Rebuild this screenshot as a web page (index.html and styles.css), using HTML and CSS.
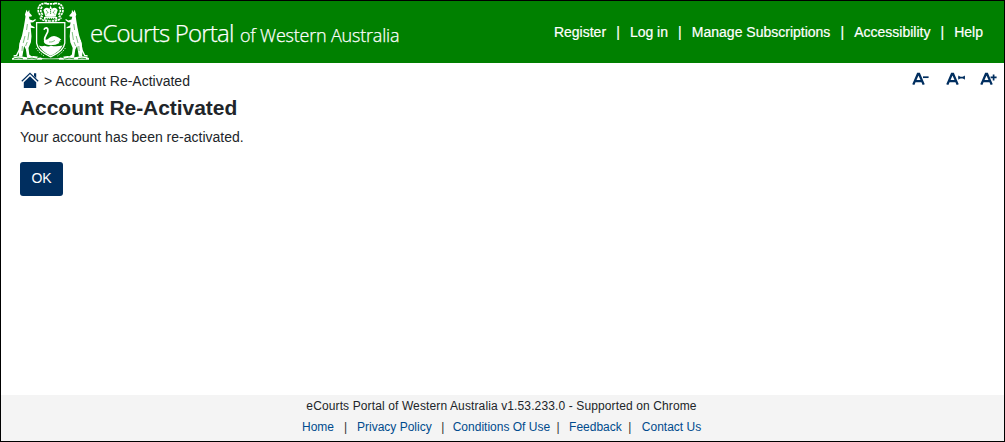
FILE: index.html
```html
<!DOCTYPE html>
<html lang="en">
<head>
<meta charset="utf-8">
<title>Account Re-Activated - eCourts Portal</title>
<link rel="stylesheet" href="styles.css">
</head>
<body>
<div class="page">
  <header class="header">
    <svg class="crest" viewBox="12 1 77 60" fill="#fff" aria-label="Coat of arms">
      <!-- supporter, mirrored for the right side -->
      <g id="kangaroo">
        <path d="M26.6 9.8l1.2 2.4 1.4-2.4.3 3 2.4 2.8-.4 1-2.6.2.8 2.8 3.2.8 2.4-1.4.6 1-2.8 2.2-2.6.3.8 3 3.4 1.8-.2 1-3.8-.6.8 8.6-.6 6-2.4 5.6.8 6.6 2.6 2v1.3h-4.8l-1.2-8.4-1.8-3.4-1.4 8.4-.4 2.4h-3.2l-.4-5 .8-8.6 2.6-8 1.6-7.6 1.2-7 .6-4.2-.6-2z"/>
        <path d="M21 40l-1.8 10-2.6 5.4-3 .6" fill="none" stroke="#fff" stroke-width="1.3"/>
        <path d="M27.4 24l-.8 6M29 32l-1.2 8M25 36l-1.8 7M27.2 42l-1.6 4M22.4 46l-.4 5" fill="none" stroke="#008000" stroke-width=".7" opacity=".7"/>
      </g>
      <use href="#kangaroo" transform="matrix(-1 0 0 1 101.2 0)"/>
      <!-- crown and mantling -->
      <path d="M43.4 10q2.5-4 6-1.2L50.6 5.6l1.3 3.2q3.4-2.8 5.8 1.2l-2 6.4H45.4z"/>
      <path d="M44 17q6.4-1.6 13.2 0v2.8q-6.6-1.4-13.2 0z"/>
      <g fill="none" stroke="#fff" stroke-width="1.7" stroke-dasharray="2.4 .7">
        <path d="M47 3.4q-8.4-.6-8.8 6.4 0 5 5 7.4M42 6.8q-2.8 4.2.8 8M54.2 3.4q8.4-.6 8.8 6.4 0 5-5 7.4M59.2 6.8q2.8 4.2-.8 8M40 17.6q2 3.6 10.6 3.4 8.6.2 10.6-3.4M46.6 3.8h8"/>
      </g>
      <path d="M46.4 10.4l1.5 2-1.5 2M54.8 10.4l-1.5 2 1.5 2M50.6 9v5M45.5 18.4h10" fill="none" stroke="#008000" stroke-width=".9" stroke-dasharray="1.4 .7"/>
      <!-- shield with swan -->
      <path d="M36.6 22.6h28.2v20.6q-1 8-14.1 13.6-13.1-5.6-14.1-13.6z" fill="#008000" stroke="#fff" stroke-width="1.3"/>
      <path d="M38.8 45.6q3 1.2 6 .2 3.6 1.2 6.2 0 5.4 1.2 11.6-.2-2.8 6.2-11.9 10.2-8.9-4-11.9-10.2z"/>
      <path d="M44 29.8q.6-2.2 2.4-2 2 .4 1.3 4-1.7 3.2-2.8 5.8-.9 3 1.3 4.6" fill="none" stroke="#fff" stroke-width="1.7"/>
      <path d="M44.6 39.4q2.2 1.4 4.8-1.6 3-2.4 6.8-1.4 2.8.6 5.2 3.4l-1.8.4 1.2 1-2.2.5.8 1.2q-4 2.6-10.6 2.2-4.6-.8-5-3.6z"/>
      <path d="M49 42q3 .6 6-1.6" fill="none" stroke="#008000" stroke-width=".5"/>
      <!-- compartment -->
      <path d="M12 58.2q4-2.8 10-1.8l6 1q4-2.4 9-1 6 2.4 13.6 2.2 7.6.2 13.6-2.2 5-1.4 9 1l6-1q6-1 10 1.8v1.6H12z"/>
      <path d="M14 58.8q5-1.4 9 0m4 0q5-1.5 10 .4m5 .2h17m5-.2q5-1.9 10-.4m4 0q4-1.2 8 0M37 58l3-1M61 57l3 1" fill="none" stroke="#008000" stroke-width=".8"/>
      <path d="M36 48l3 4 5 4M65.4 48l-3 4-5 4" fill="none" stroke="#fff" stroke-width=".8" stroke-dasharray="1.5 1"/>
    </svg>
    <div class="brand"><span class="brand-main">eCourts Portal</span><span class="brand-sub">of Western Australia</span></div>
    <nav class="nav">
      <a>Register</a><span>|</span><a>Log in</a><span>|</span><a>Manage Subscriptions</a><span>|</span><a>Accessibility</a><span>|</span><a>Help</a>
    </nav>
  </header>
  <main class="main">
    <div class="toolbar">
      <div class="crumbs">
        <svg class="home" viewBox="0 0 18 17" fill="#002e5f"><path d="M9 4.2l6.2 6V16H2.8v-5.8z"/><path d="M.8 9.3L9 1.3l8.2 8" fill="none" stroke="#002e5f" stroke-width="1.2"/><path d="M13 1.2h2.2v5L13 4z"/></svg>
        <span>&gt; Account Re-Activated</span>
      </div>
      <div class="sizes">
        <svg class="size" viewBox="0 0 20 14"><path class="letter" d="M1.3 12.6L5.9 2h1.2l4.6 10.6M3 9.2h7"/><path class="sign" d="M11 5.2h5.6"/></svg>
        <svg class="size" viewBox="0 0 20 14"><path class="letter" d="M1.3 12.6L5.9 2h1.2l4.6 10.6M3 9.2h7"/><path class="sign" d="M12.4 5.6h6"/><path class="arrow" d="M12.3 3.4l3 2.2-3 2.2zM18.9 3.4l-3 2.2 3 2.2z"/></svg>
        <svg class="size" viewBox="0 0 20 14"><path class="letter" d="M1.3 12.6L5.9 2h1.2l4.6 10.6M3 9.2h7"/><path class="sign" d="M10.6 5.4h6M13.6 2.4v6"/></svg>
      </div>
    </div>
    <h1 class="heading">Account Re-Activated</h1>
    <p class="message">Your account has been re-activated.</p>
    <button class="ok">OK</button>
  </main>
  <footer class="footer">
    <div class="version">eCourts Portal of Western Australia v1.53.233.0 - Supported on Chrome</div>
    <div class="links">
      <a class="l-home">Home</a><span class="bar b1">|</span><a>Privacy Policy</a><span class="bar b2">|</span><a class="l-cond">Conditions Of Use</a><span class="bar b3">|</span><a>Feedback</a><span class="bar b4">|</span><a>Contact Us</a>
    </div>
  </footer>
</div>
</body>
</html>
```
FILE: styles.css
```css
* { box-sizing: border-box; }
body { margin: 0; font-family: "Liberation Sans", Arial, sans-serif; font-size: 14px; color: #212529; }
.page { width: 1005px; height: 442px; border: 1px solid #000; display: flex; flex-direction: column; background: #fff; }
.header { height: 62px; flex: none; background: #008000; color: #fff; display: flex; align-items: flex-start; padding-left: 11px; }
.crest { width: 77px; height: 60px; flex: none; }
.brand { margin-left: 1px; padding-top: 15px; font-family: "Open Sans", "Noto Sans", sans-serif; font-weight: 300; line-height: 34px; white-space: nowrap; display: flex; align-items: baseline; -webkit-text-stroke: .25px #fff; }
.brand-main { font-size: 24px; width: 150px; letter-spacing: -.8px; }
.brand-sub { font-size: 18px; letter-spacing: -.2px; }
.nav { margin-left: auto; padding: 22px 21px 0 0; line-height: 18px; display: flex; white-space: nowrap; -webkit-text-stroke: .2px #fff; }
.nav span { width: 23.8px; text-align: center; }
.main { flex: 1; padding: 6px 4px 0 19px; }
.toolbar { display: flex; justify-content: space-between; height: 24px; }
.crumbs { display: flex; align-items: center; gap: 5px; height: 24px; }
.home { width: 18px; height: 17px; margin: -2px 0 0 1px; }
.sizes { display: flex; gap: 14px; padding-top: 3px; }
.size { width: 20px; height: 14px; }
.letter, .sign { fill: none; stroke: #002e5f; stroke-width: 2.3; }
.sign { stroke-width: 1.7; }
.arrow { fill: #002e5f; }
.heading { margin: 2px 0 0; font-size: 21px; line-height: 25px; font-weight: 700; letter-spacing: -.05px; }
.message { margin: 7px 0 0; line-height: 20px; }
.ok { display: block; width: 43px; height: 34px; margin-top: 15px; padding: 0 0 2px; border: 0; border-radius: 3px; background: #002e5f; color: #fff; font: 14px "Liberation Sans", Arial, sans-serif; }
.footer { height: 46px; flex: none; background: #f4f4f4; font-size: 12px; }
.version { padding: 2px 2px 0 0; line-height: 18px; text-align: center; letter-spacing: .12px; }
.links { display: flex; padding-left: 301px; margin-top: 3px; line-height: 18px; color: #004b8d; white-space: nowrap; }
.bar { color: #333; text-align: center; }
.l-cond { margin-left: -1px; }
.b1 { width: 23px; }
.b2 { width: 22px; }
.b3 { width: 16px; margin-right: 3px; }
.b4 { width: 16px; margin-right: 4px; }
```
